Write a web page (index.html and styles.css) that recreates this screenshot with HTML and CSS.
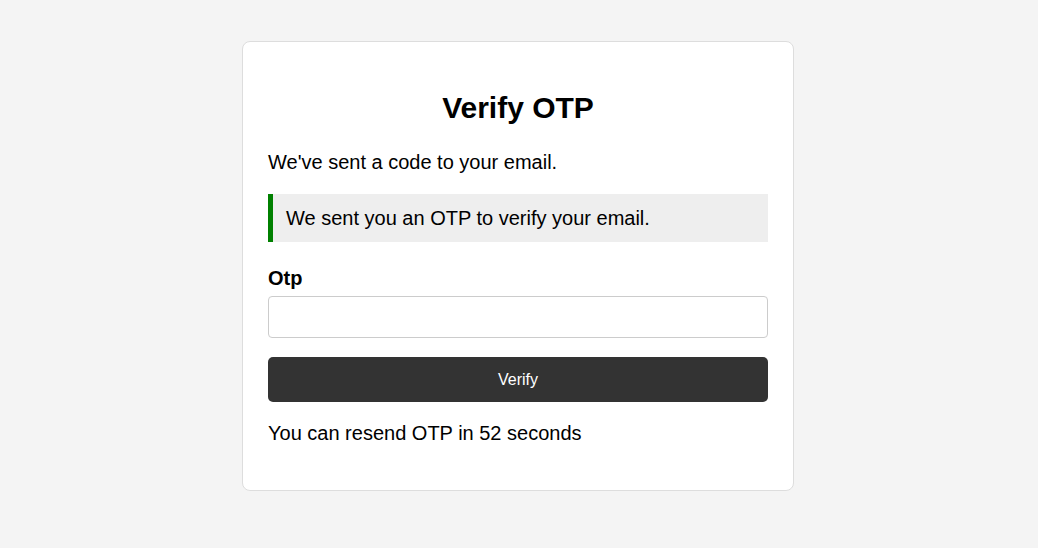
FILE: index.html
```html
<!DOCTYPE html>
<html lang="en">
<head>
<meta charset="utf-8">
<title>Verify OTP</title>
<link rel="stylesheet" href="styles.css">
</head>
<body>
  <main class="card">
    <h2 class="title">Verify OTP</h2>
    <p class="intro">We've sent a code to your email.</p>
    <div class="alert">We sent you an OTP to verify your email.</div>
    <form class="form">
      <label class="label" for="otp">Otp</label>
      <input class="input" id="otp" type="text">
      <button class="button" type="button">Verify</button>
    </form>
    <p class="resend">You can resend OTP in 52 seconds</p>
  </main>
</body>
</html>
```
FILE: styles.css
```css
html, body {
  margin: 0;
  padding: 0;
}
body {
  background: #f4f4f4;
  font-family: "Liberation Sans", Arial, sans-serif;
  font-size: 20px;
  color: #000;
  padding-top: 41px;
}
.card {
  box-sizing: border-box;
  width: 552px;
  margin: 0 auto;
  margin-left: calc(50% - 277px);
  background: #fff;
  border: 1px solid #ddd;
  border-radius: 8px;
  padding: 0 25px;
  display: flow-root;
}
.title {
  font-size: 30px;
  font-weight: bold;
  text-align: center;
  margin: 49px 0 26px;
  line-height: 34px;
}
.intro {
  margin: 0 0 20px;
  line-height: 23px;
}
.alert {
  background: #eee;
  border-left: 5px solid #008000;
  padding: 13px 13px 12px;
  line-height: 23px;
  margin: 0 0 25px;
}
.form {
  display: flex;
  flex-direction: column;
}
.label {
  font-weight: bold;
  line-height: 23px;
  margin-bottom: 6px;
}
.input {
  box-sizing: border-box;
  height: 42px;
  width: 100%;
  border: 1px solid #ccc;
  border-radius: 4px;
  padding: 10px;
  font-family: inherit;
  font-size: 16px;
  margin: 0 0 19px;
  background: #fff;
}
.button {
  box-sizing: border-box;
  height: 45px;
  width: 100%;
  border: none;
  border-radius: 5px;
  background: #333;
  color: #fff;
  font-family: "Liberation Sans", Arial, sans-serif;
  font-size: 16px;
  cursor: pointer;
}
.resend {
  margin: 20px 0 45px;
  line-height: 23px;
}
```
